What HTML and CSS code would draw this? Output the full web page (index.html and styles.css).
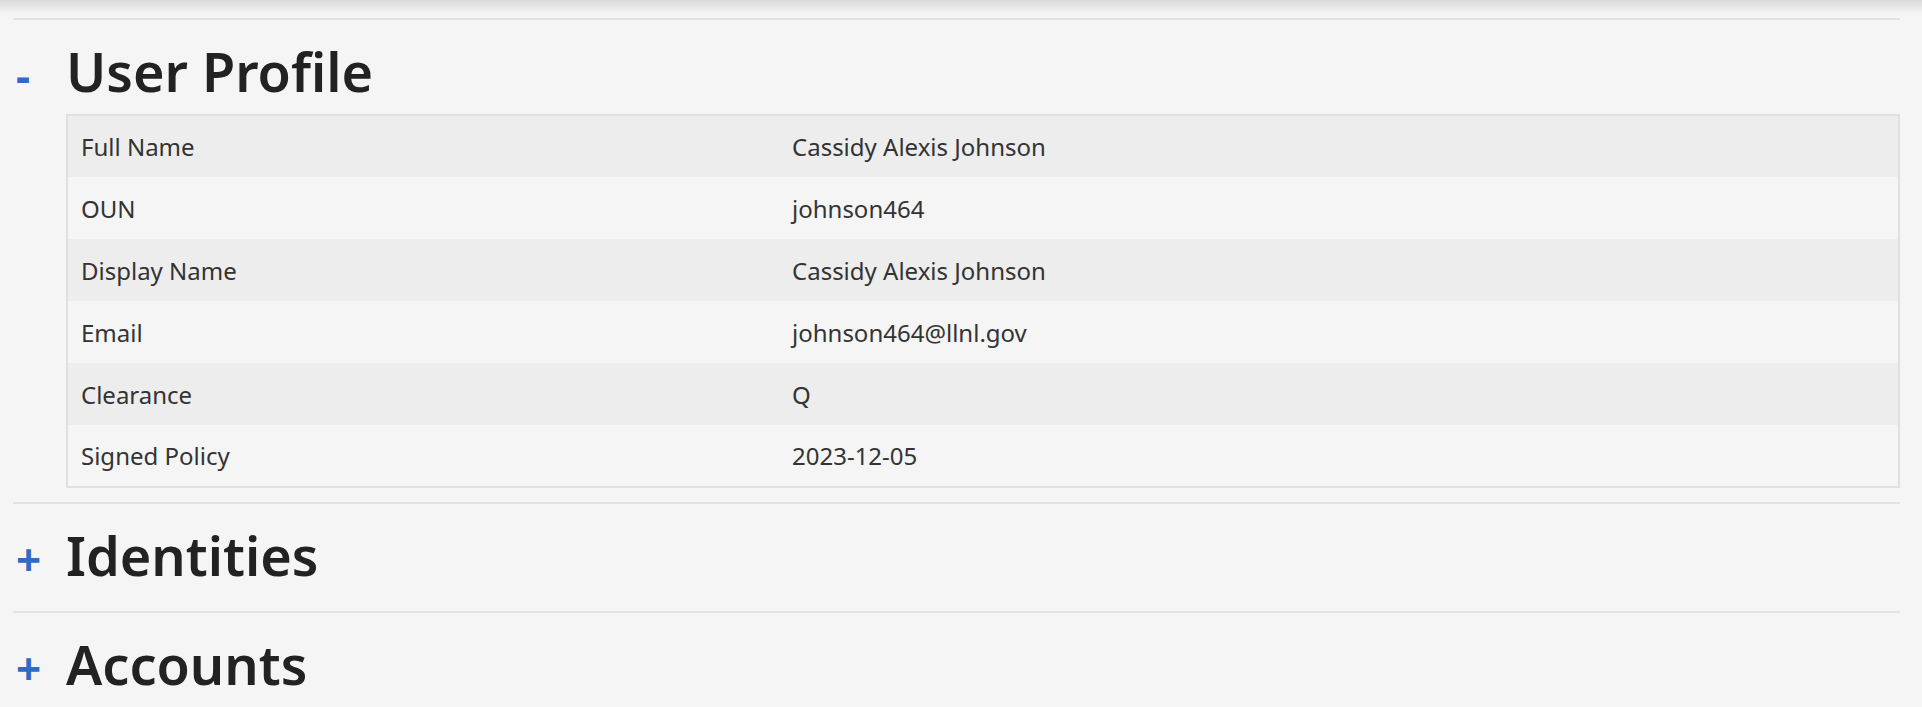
FILE: index.html
```html
<!DOCTYPE html>
<html lang="en">
<head>
    <meta charset="UTF-8">
    <meta name="viewport" content="width=device-width, initial-scale=1.0">
    <title>User Profile</title>
    <link rel="stylesheet" href="styles.css">
</head>
<body>
    <div class="topbar"></div>

    <div class="content">
        <div class="section open">
            <h2 class="section-title"><span class="toggle">-</span>User Profile</h2>
            <table class="profile">
                <tr><td>Full Name</td><td>Cassidy Alexis Johnson</td></tr>
                <tr><td>OUN</td><td>johnson464</td></tr>
                <tr><td>Display Name</td><td>Cassidy Alexis Johnson</td></tr>
                <tr><td>Email</td><td>johnson464@llnl.gov</td></tr>
                <tr><td>Clearance</td><td>Q</td></tr>
                <tr><td>Signed Policy</td><td>2023-12-05</td></tr>
            </table>
        </div>

        <div class="section">
            <h2 class="section-title"><span class="toggle">+</span>Identities</h2>
        </div>

        <div class="section">
            <h2 class="section-title"><span class="toggle">+</span>Accounts</h2>
        </div>
    </div>
</body>
</html>
```

FILE: styles.css
```css
body{
    margin:0;
    padding:0;
    background:#f5f5f5;
    font-family:"Noto Sans","Open Sans",sans-serif;
    color:#333;
}
.topbar{
    height:14px;
    background:linear-gradient(#d9d9d9,#f5f5f5);
}
.content{
    padding:4px 22px 0 13px;
}
.section{
    border-top:2px solid #e2e2e2;
    padding-bottom:16px;
}
.section.open{
    padding-bottom:14px;
}
.section-title{
    display:flex;
    align-items:baseline;
    margin:0;
    padding:19px 0 4px;
    font-size:54px;
    font-weight:600;
    line-height:64px;
    color:#222;
}
.toggle{
    width:53px;
    padding-left:3px;
    box-sizing:border-box;
    font-size:44px;
    font-weight:700;
    color:#2f6bc4;
}
.profile{
    width:calc(100% - 53px);
    margin-left:53px;
    margin-top:3px;
    border-collapse:collapse;
    border:2px solid #e0e0e0;
    font-size:24px;
    color:#333;
}
.profile td{
    height:62px;
    padding:0 13px;
    box-sizing:border-box;
}
.profile td:first-child{
    width:712px;
}
.profile tr:nth-child(odd){
    background:#ededed;
}
.profile tr:nth-child(even){
    background:#f5f5f5;
}
```
